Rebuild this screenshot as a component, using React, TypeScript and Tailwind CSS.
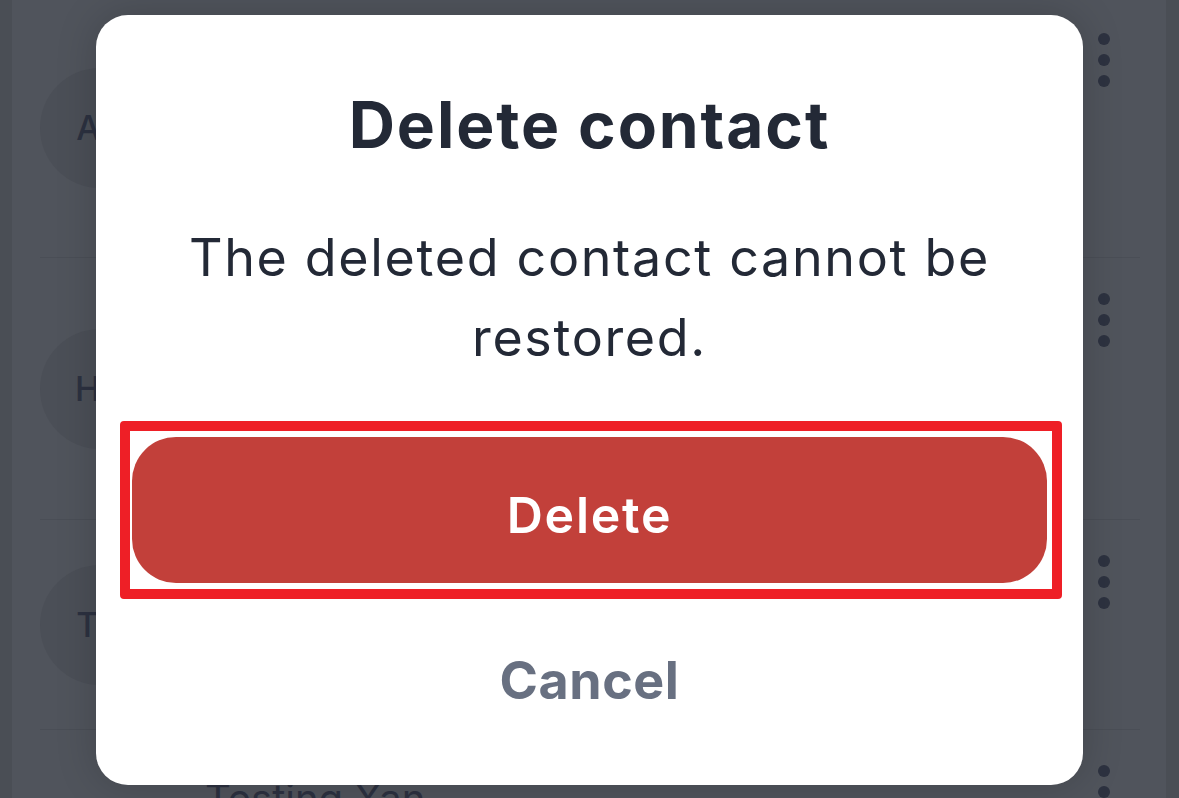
import React from 'react';

type Contact = { initials: string; name: string; detail: string; height: string };

const contacts: Contact[] = [
    { initials: 'AS', name: 'Anna Smith', detail: 'anna@example.com', height: 'h-[260px]' },
    { initials: 'HK', name: 'Henry Klein', detail: 'henry@example.com', height: 'h-[262px]' },
    { initials: 'TX', name: 'Testing Xan', detail: 'No email', height: 'h-[210px]' },
    { initials: 'TX', name: 'Testing Xan', detail: 'No email', height: 'h-[262px]' },
];

const MoreDots: React.FC = () => (
    <div className="flex flex-col gap-[9px]">
        <span className="w-[12px] h-[12px] rounded-full bg-[#2d3240]" />
        <span className="w-[12px] h-[12px] rounded-full bg-[#2d3240]" />
        <span className="w-[12px] h-[12px] rounded-full bg-[#2d3240]" />
    </div>
);

const ContactRow: React.FC<{ contact: Contact; last?: boolean }> = ({ contact, last }) => (
    <div className={`${contact.height} flex items-start ${last ? '' : 'border-b border-[#4a4e56]'}`}>
        <div className="self-center w-[120px] h-[120px] rounded-full bg-[#4b4f57] flex items-center justify-center shrink-0">
            <span className="text-[34px] font-medium text-[#2c3140] tracking-[0.02em]">{contact.initials}</span>
        </div>
        <div className="flex-1 pl-[45px] pt-[45px]">
            <p className="text-[40px] leading-[48px] text-[#2c3140]">{contact.name}</p>
            <p className="text-[32px] leading-[44px] text-[#3a3f4c]">{contact.detail}</p>
        </div>
        <div className="pt-[35px] pr-[30px]">
            <MoreDots />
        </div>
    </div>
);

const App: React.FC = () => {
    return (
        <div className="relative w-[1179px] h-[798px] overflow-hidden bg-[#50545c] font-['Inter','Noto_Sans',sans-serif]">
            {/* contact list behind the dim overlay */}
            <div className="flex h-full">
                <div className="w-[12px] bg-[#4a4e55]" />
                <div className="flex-1 mt-[-2px] ml-[28px] mr-[26px]">
                    {contacts.map((c, i) => (
                        <ContactRow key={i} contact={c} last={i === contacts.length - 1} />
                    ))}
                </div>
                <div className="w-[13px] bg-[#4a4e55]" />
            </div>

            {/* confirm dialog */}
            <div className="absolute left-[96px] top-[15px] w-[987px] h-[770px] bg-white rounded-[32px] shadow-[0_0_40px_rgba(0,0,0,0.18)] flex flex-col pt-[71px]">
                <h2 className="text-center text-[64px] leading-[77px] font-bold text-[#232936] tracking-[0.03em]">
                    Delete contact
                </h2>
                <p className="mt-[55px] px-[70px] text-center text-[52px] leading-[80px] text-[#232936] tracking-[0.032em]">
                    The deleted contact cannot be restored.
                </p>
                <div className="mt-[43px] ml-[24px] w-[942px] border-[10px] border-[#ee1f26] rounded-[4px] pl-[2px] pr-[5px] py-[6px]">
                    <button className="w-full h-[146px] rounded-[44px] bg-[#c2403a] text-white text-[50px] font-semibold tracking-[0.035em] pt-[10px]">
                        Delete
                    </button>
                </div>
                <button className="mt-[52px] h-[60px] text-center text-[52px] leading-[60px] font-bold text-[#687081] tracking-[0.01em]">
                    Cancel
                </button>
            </div>
        </div>
    );
};

export default App;
